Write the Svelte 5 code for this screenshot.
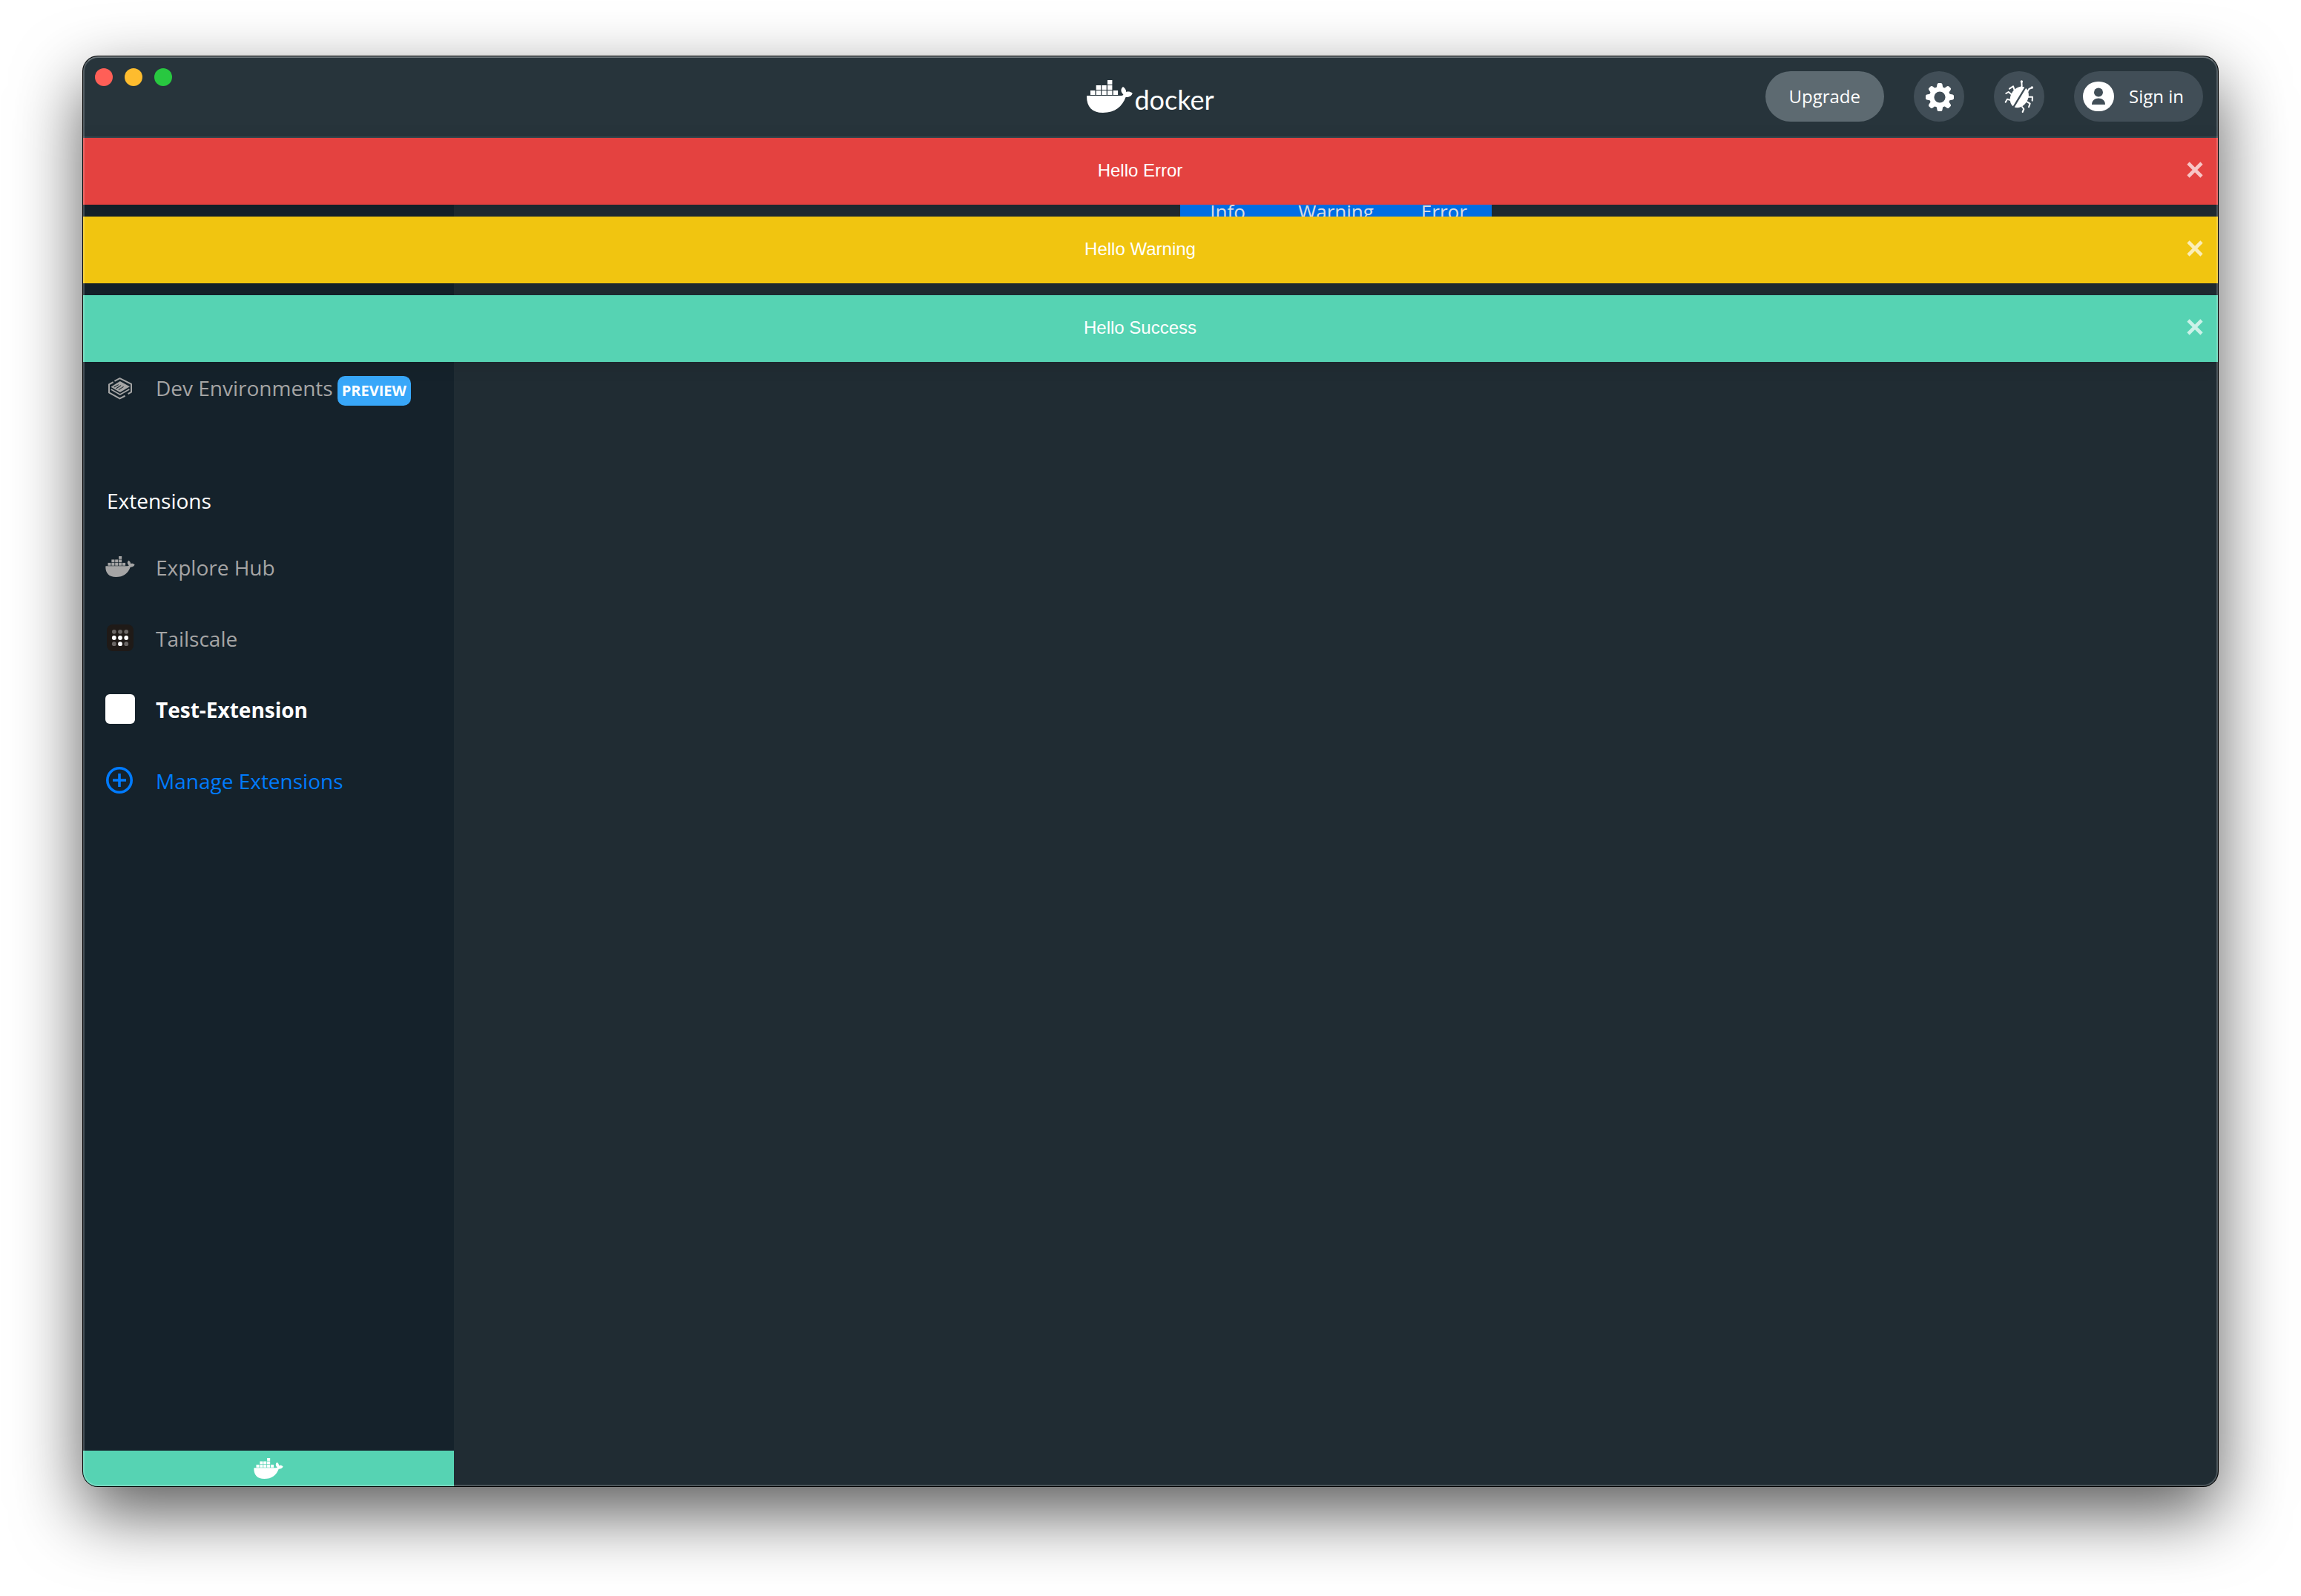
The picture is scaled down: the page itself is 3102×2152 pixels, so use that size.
<script>
  let toasts = $state([
    { kind: 'error', text: 'Hello Error' },
    { kind: 'warning', text: 'Hello Warning' },
    { kind: 'success', text: 'Hello Success' }
  ]);

  const toastActions = ['Info', 'Warning', 'Error'];
  const dismiss = (kind) => (toasts = toasts.filter((t) => t.kind !== kind));
</script>

{#snippet whale(size)}
  <svg class="whale {size}" viewBox="0 0 62 44" fill="currentColor" aria-hidden="true">
    <rect x="28" y="0" width="6.4" height="6" />
    <rect x="12.7" y="7" width="6.4" height="6" />
    <rect x="20.3" y="7" width="6.4" height="6" />
    <rect x="28" y="7" width="6.4" height="6" />
    <rect x="5" y="14" width="6.4" height="6" />
    <rect x="12.7" y="14" width="6.4" height="6" />
    <rect x="20.3" y="14" width="6.4" height="6" />
    <rect x="28" y="14" width="6.4" height="6" />
    <rect x="35.7" y="14" width="6.4" height="6" />
    <path d="M1 21H45C47.5 21 49 20.4 49.4 19.4C45.8 16.5 45.2 12 49 9C51.8 10.8 53.2 13.3 53.2 16C56 15 59.6 15.5 61.8 18C60 21.8 56.4 23.2 52.6 23C48 35.5 38 44 22 44C7 44 0 36 0 22C0 21.4 .4 21 1 21Z" />
  </svg>
{/snippet}

<div class="desktop">
  <div class="window">
    <header>
      <div class="lights">
        <button class="light close" aria-label="Close window"></button>
        <button class="light minimise" aria-label="Minimise window"></button>
        <button class="light zoom" aria-label="Zoom window"></button>
      </div>
      <div class="logo">
        {@render whale('large')}
        <span class="wordmark">docker</span>
      </div>
      <div class="tools">
        <button class="pill upgrade">Upgrade</button>
        <button class="pill round" aria-label="Settings">
          <svg viewBox="-34 -34 68 68" width="68" height="68" aria-hidden="true">
            <g transform="translate(1 1)" fill="#fff">
              <circle r="14" />
              <path id="tooth" d="M-4.4 -12L-3.4 -17.5Q-3 -19 -1.6 -19H1.6Q3 -19 3.4 -17.5L4.4 -12V12L3.4 17.5Q3 19 1.6 19H-1.6Q-3 19 -3.4 17.5L-4.4 12Z" />
              <use href="#tooth" transform="rotate(45)" />
              <use href="#tooth" transform="rotate(90)" />
              <use href="#tooth" transform="rotate(135)" />
              <circle r="7.6" fill="#414e57" />
            </g>
          </svg>
        </button>
        <button class="pill round" aria-label="Troubleshoot">
          <svg viewBox="354 18 204 204" width="68" height="68" aria-hidden="true">
            <ellipse cx="457" cy="123" rx="35" ry="45" transform="rotate(30 457 123)" fill="#fff" />
            <path d="M486 76L428 172" stroke="#414e57" stroke-width="7" />
            <g fill="none" stroke="#fff" stroke-width="6" stroke-linecap="round" stroke-linejoin="round">
              <path d="M466 61L467 78L460 92" />
              <path d="M509 84L496 90L489 103" />
              <path d="M417 89L432 79L437 94" />
              <path d="M403 108L413 102L425 112" />
              <path d="M401 143L408 131L422 135" />
              <path d="M492 122H510L509 137" />
              <path d="M488 142L500 149L495 163" />
              <path d="M468 162L475 171L470 183" />
            </g>
            <circle cx="466" cy="60" r="5" fill="#fff" />
            <circle cx="508" cy="84" r="5" fill="#fff" />
          </svg>
        </button>
        <button class="pill sign-in">
          <svg viewBox="0 0 42 40" width="42" height="40" aria-hidden="true">
            <rect width="42" height="40" rx="20" fill="#fff" />
            <circle cx="21" cy="14.5" r="6" fill="#414e57" />
            <path d="M12 31C12 25.5 16 22.5 21 22.5S30 25.5 30 31Z" fill="#414e57" />
          </svg>
          <span class="caption">Sign in</span>
        </button>
      </div>
    </header>

    <div class="body">
      <aside>
        <nav>
          <a class="item" href="#dev-environments">
            <span class="icon">
              <svg viewBox="37 22 95 88" width="32" height="30" aria-hidden="true">
                <g fill="none" stroke="#a5a5a5" stroke-width="6" stroke-linejoin="round">
                  <path d="M62 36L83 25L129 48V80L116 87" />
                  <path d="M57 40L40 49V82L83 106L104 95" />
                  <path d="M48 69L84 90L121 69" stroke-width="5" />
                </g>
                <path d="M84 36L123 58L84 81L47 59Z" fill="#a5a5a5" />
                <g stroke="#15222b" stroke-width="3">
                  <path d="M60 60L78 50" />
                  <path d="M68 66L88 53" />
                  <path d="M78 71L98 58" />
                </g>
              </svg>
            </span>
            <span class="label">Dev Environments<span class="badge">PREVIEW</span></span>
          </a>
          <h2>Extensions</h2>
          <a class="item" href="#hub">
            <span class="icon">{@render whale('small')}</span>
            <span class="label">Explore Hub</span>
          </a>
          <a class="item" href="#tailscale">
            <span class="icon">
              <svg viewBox="0 0 36 36" width="36" height="36" aria-hidden="true">
                <rect width="36" height="36" rx="8" fill="#1f1a17" />
                <g fill="#6b6765">
                  <circle cx="9.8" cy="9.8" r="2.9" />
                  <circle cx="18" cy="9.8" r="2.9" />
                  <circle cx="26.2" cy="9.8" r="2.9" />
                  <circle cx="9.8" cy="26.2" r="2.9" />
                  <circle cx="26.2" cy="26.2" r="2.9" />
                </g>
                <g fill="#fff">
                  <circle cx="9.8" cy="18" r="2.9" />
                  <circle cx="18" cy="18" r="2.9" />
                  <circle cx="26.2" cy="18" r="2.9" />
                  <circle cx="18" cy="26.2" r="2.9" />
                </g>
              </svg>
            </span>
            <span class="label">Tailscale</span>
          </a>
          <a class="item active" href="#test-extension" aria-current="page">
            <span class="icon"><span class="blank"></span></span>
            <span class="label">Test-Extension</span>
          </a>
          <a class="item manage" href="#manage">
            <span class="icon">
              <svg viewBox="0 0 38 36" width="38" height="36" fill="none" stroke="currentColor" stroke-width="3.6" aria-hidden="true">
                <circle cx="18" cy="18" r="16.2" />
                <path d="M9 18H27M18 9V27" />
              </svg>
            </span>
            <span class="label">Manage Extensions</span>
          </a>
        </nav>
        <div class="status">{@render whale('small')}</div>
      </aside>
      <main>
        <div class="group">
          {#each toastActions as action}
            <button>{action}</button>
          {/each}
        </div>
      </main>
      <div class="toasts">
        {#each toasts as toast (toast.kind)}
          <div class="toast {toast.kind}" role="alert">
            <span class="message">{toast.text}</span>
            <button aria-label="Dismiss" onclick={() => dismiss(toast.kind)}>
              <svg viewBox="0 0 28 28" width="28" height="28" aria-hidden="true">
                <path d="M5 5L23 23M23 5L5 23" stroke="#fff" stroke-opacity=".7" stroke-width="4.6" />
              </svg>
            </button>
          </div>
        {/each}
      </div>
    </div>
  </div>
</div>

<style>
  :global(body) {
    margin: 0;
    background: #fff;
  }
  * {
    box-sizing: border-box;
  }
  button {
    margin: 0;
    padding: 0;
    border: 0;
    background: none;
    color: inherit;
    font: inherit;
    cursor: pointer;
  }
  svg {
    display: block;
    flex: none;
  }
  .desktop {
    display: flex;
    min-height: 100vh;
    padding: 76px 112px 148px;
    font-family: 'Open Sans', 'Noto Sans', sans-serif;
    font-size: 28px;
    color: #fff;
  }
  .window {
    position: relative;
    flex: 1;
    display: flex;
    flex-direction: column;
    border-radius: 20px;
    overflow: hidden;
    background: #202c33;
    box-shadow: 0 0 0 1px #000, 0 36px 92px rgba(0, 0, 0, 0.65);
  }
  .window::after {
    content: '';
    position: absolute;
    inset: 0;
    z-index: 2;
    border: 2px solid rgba(255, 255, 255, 0.2);
    border-top-color: rgba(255, 255, 255, 0.32);
    border-radius: 20px;
    pointer-events: none;
  }

  header {
    display: grid;
    grid-template-columns: 1fr auto 1fr;
    align-items: center;
    height: 110px;
    border-bottom: 2px solid #39464e;
    background: #27343b;
  }
  .lights {
    display: flex;
    gap: 16px;
    align-self: start;
    padding: 16px;
  }
  .light {
    width: 24px;
    height: 24px;
    border-radius: 50%;
  }
  .light.close {
    background: #ff5f57;
  }
  .light.minimise {
    background: #febc2e;
  }
  .light.zoom {
    background: #28c840;
  }
  .logo {
    display: flex;
    align-items: center;
    gap: 2px;
  }
  .whale.large {
    width: 62px;
    height: 44px;
  }
  .whale.small {
    width: 40px;
    height: 28px;
  }
  .wordmark {
    padding-top: 8px;
    font-family: Lato, sans-serif;
    font-size: 36px;
    line-height: 36px;
  }
  .tools {
    display: flex;
    justify-content: flex-end;
    gap: 40px;
    padding-right: 20px;
    font-size: 24px;
  }
  .pill {
    display: flex;
    align-items: center;
    justify-content: center;
    height: 68px;
    border-radius: 34px;
    background: #414e57;
  }
  .upgrade {
    padding: 0 32px 2px;
    background: #5d6a71;
  }
  .round {
    width: 68px;
  }
  .sign-in {
    gap: 20px;
    padding: 0 26px 0 12px;
  }
  .caption {
    padding-bottom: 2px;
  }

  .body {
    position: relative;
    flex: 1;
    display: flex;
  }
  aside {
    display: flex;
    flex-direction: column;
    width: 500px;
    background: #15222b;
  }
  nav {
    flex: 1;
    padding: 291px 30px 0;
  }
  .item {
    display: flex;
    align-items: center;
    gap: 28px;
    height: 96px;
    color: #a5a5a5;
    text-decoration: none;
    white-space: nowrap;
  }
  .icon {
    display: flex;
    justify-content: center;
    width: 40px;
    padding-bottom: 3px;
  }
  .label {
    line-height: 40px;
  }
  .badge {
    display: inline-block;
    margin-left: 6px;
    padding: 0 6px;
    border-radius: 10px;
    background: #38a7f9;
    color: #fff;
    font-size: 20px;
    font-weight: 700;
    line-height: 40px;
  }
  .active {
    color: #fff;
    font-weight: 700;
  }
  .blank {
    width: 40px;
    height: 40px;
    border-radius: 6px;
    background: #fff;
  }
  .manage {
    color: #007bff;
  }
  h2 {
    margin: 82px 2px 22px;
    font-size: 28px;
    font-weight: 400;
    line-height: 40px;
  }
  .status {
    display: flex;
    align-items: center;
    justify-content: center;
    height: 48px;
    background: #56d3b3;
  }

  main {
    flex: 1;
    padding-top: 62px;
  }
  .group {
    display: flex;
    justify-content: center;
  }
  .group button {
    min-width: 128px;
    height: 74px;
    padding: 0 31px;
    background: #0075f2;
    color: #e8eaed;
    font-size: 26px;
    font-weight: 500;
  }

  .toasts {
    position: absolute;
    inset: 0 0 auto;
    display: flex;
    flex-direction: column;
    gap: 16px;
  }
  .toast {
    display: flex;
    align-items: center;
    height: 90px;
    padding: 0 17px 4px;
    box-shadow: 0 4px 24px rgba(0, 0, 0, 0.1);
    font-family: 'Liberation Sans', Arial, sans-serif;
    font-size: 24px;
  }
  .message {
    flex: 1;
    padding-top: 2px;
    text-align: center;
  }
  .error {
    background: #e44240;
  }
  .warning {
    background: #f1c510;
  }
  .success {
    background: #56d3b3;
  }
</style>
